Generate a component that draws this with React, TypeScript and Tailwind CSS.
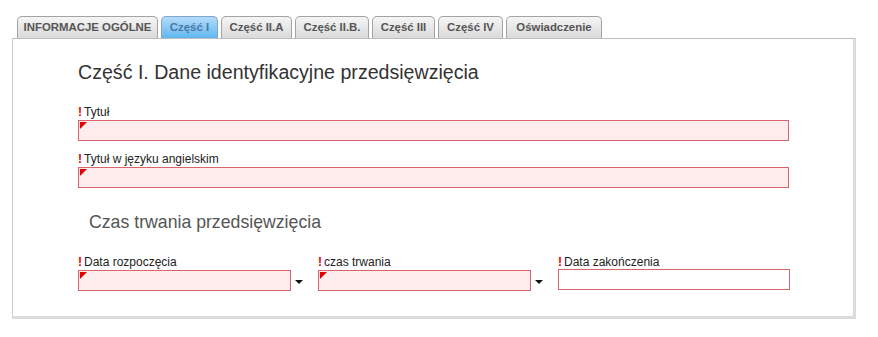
import React from "react";

// Tab strip + form panel, old-style web form look.

const tabs = [
  { label: "INFORMACJE OGÓLNE", active: false, w: "w-[141px]" },
  { label: "Część I", active: true, w: "w-[57px]" },
  { label: "Część II.A", active: false, w: "w-[71px]" },
  { label: "Część II.B.", active: false, w: "w-[74px]" },
  { label: "Część III", active: false, w: "w-[63px]" },
  { label: "Część IV", active: false, w: "w-[65px]" },
  { label: "Oświadczenie", active: false, w: "w-[96px]" },
];

function Req({ text }: { text: string }) {
  return (
    <div className="flex h-[14px] items-end text-[12px] leading-[14px] text-[#222]">
      <span className="mr-[2px] font-bold text-[#e00000]">!</span>
      <span>{text}</span>
    </div>
  );
}

function Field({ invalid = true, className = "" }: { invalid?: boolean; className?: string }) {
  return (
    <div
      className={`relative h-[21px] shrink-0 border border-[#d9656c] ${invalid ? "bg-[#ffeded]" : "bg-white"} ${className}`}
    >
      {invalid ? (
        <svg className="absolute left-[1px] top-[1px]" width="7" height="7" viewBox="0 0 7 7">
          <polygon points="0,0 7,0 0,7" fill="#e00000" />
        </svg>
      ) : null}
    </div>
  );
}

function Caret() {
  return <span className="ml-[4px] mt-[10px] h-0 w-0 border-x-[4px] border-t-[4px] border-x-transparent border-t-[#111]" />;
}

export default function App() {
  return (
    <div className="h-[337px] w-[878px] bg-white font-[family-name:'Liberation_Sans',Arial,sans-serif]">
      <div className="pl-[17px] pt-[16px]">
        <div className="flex gap-[3px]">
          {tabs.map((t) => (
            <div
              key={t.label}
              className={`flex h-[22px] items-center justify-center rounded-t-[5px] border border-b-0 text-[11.4px] font-bold ${t.w} ${
                t.active
                  ? "border-[#7fa6cc] bg-gradient-to-b from-[#b4dbf8] to-[#5fb7ef] text-[#4a78a8]"
                  : "border-[#a3a3a3] bg-gradient-to-b from-[#f5f5f5] to-[#dadada] text-[#555]"
              }`}
            >
              {t.label}
            </div>
          ))}
        </div>
      </div>
      <div className="ml-[12px] h-[281px] w-[844px] border-l border-t border-l-[#cfcfcf] border-t-[#bdbdbd] border-b-[3px] border-r-[3px] border-b-[#dcdcdc] border-r-[#dcdcdc] bg-white">
        <div className="pl-[65px] pr-[50px] pt-[21px]">
          <h1 className="text-[19.6px] leading-[24px] text-[#333]">Część I. Dane identyfikacyjne przedsięwzięcia</h1>
          <div className="mt-[21px]">
            <Req text="Tytuł" />
            <Field className="mt-[1px] w-[711px]" />
          </div>
          <div className="mt-[11px]">
            <Req text="Tytuł w języku angielskim" />
            <Field className="mt-[1px] w-[711px]" />
          </div>
          <h2 className="ml-[11px] mt-[23px] text-[17.7px] leading-[22px] text-[#555]">Czas trwania przedsięwzięcia</h2>
          <div className="mt-[22px] flex">
            <div className="w-[240px] shrink-0">
              <Req text="Data rozpoczęcia" />
              <div className="mt-[1px] flex">
                <Field className="w-[213px]" />
                <Caret />
              </div>
            </div>
            <div className="w-[240px] shrink-0">
              <Req text="czas trwania" />
              <div className="mt-[1px] flex">
                <Field className="w-[213px]" />
                <Caret />
              </div>
            </div>
            <div className="w-[232px] shrink-0">
              <Req text="Data zakończenia" />
              <Field invalid={false} className="mt-0 h-[20px] w-[232px]" />
            </div>
          </div>
        </div>
      </div>
    </div>
  );
}
